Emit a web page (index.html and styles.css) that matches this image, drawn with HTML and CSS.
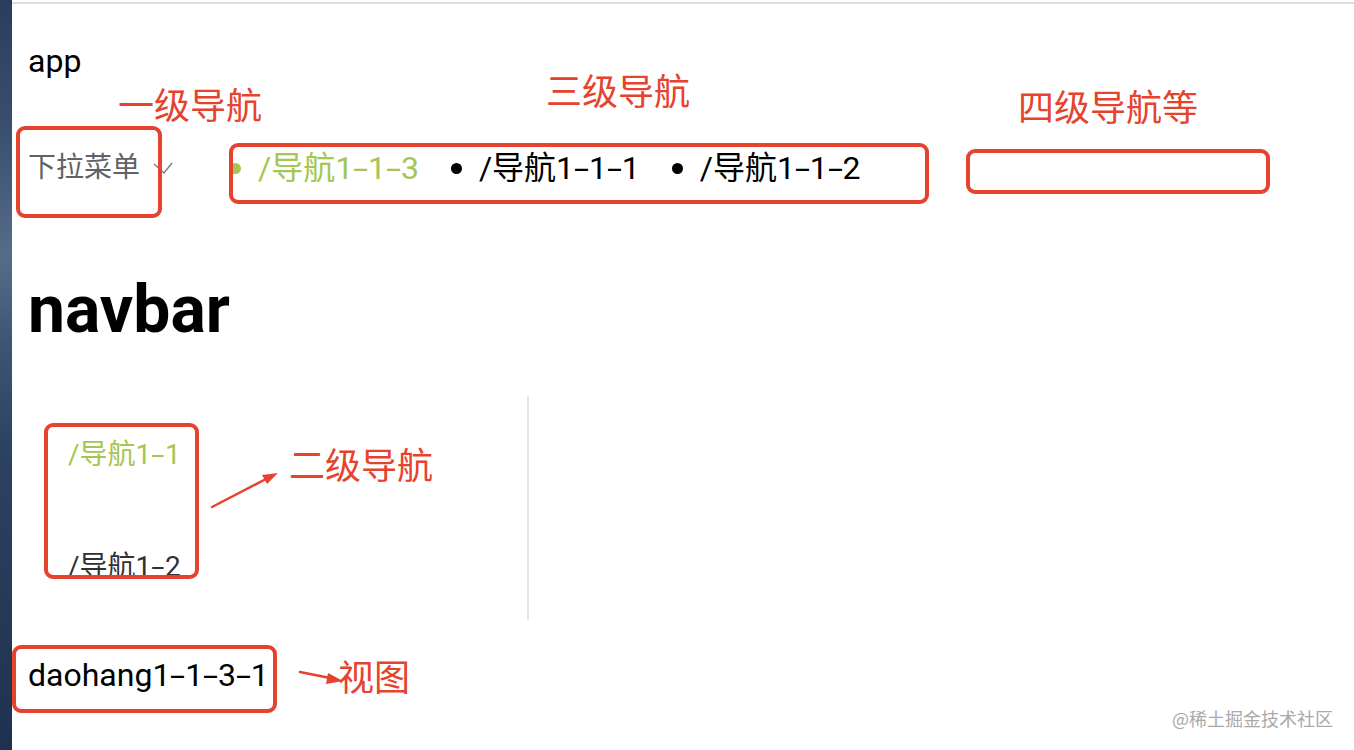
FILE: index.html
```html
<!DOCTYPE html>
<html lang="zh-CN">
<head>
<meta charset="utf-8">
<title>navbar</title>
<link rel="stylesheet" href="styles.css">
</head>
<body>
<div class="screen">
  <div class="desk-strip"></div>
  <div class="window">
    <div class="app-title">app</div>
    <div class="top-row">
      <div class="dropdown">
        <span class="dropdown-label">下拉菜单</span>
        <svg class="chevron" width="22" height="14" viewBox="0 0 22 14"><polyline points="2,3 12,12 20,2" fill="none" stroke="#7a7c80" stroke-width="1.4"/></svg>
      </div>
      <ul class="third-nav">
        <li class="third-item active"><span class="dot"></span><span>/导航1<span class="dash">-</span>1<span class="dash">-</span>3</span></li>
        <li class="third-item"><span class="dot"></span><span>/导航1<span class="dash">-</span>1<span class="dash">-</span>1</span></li>
        <li class="third-item"><span class="dot"></span><span>/导航1<span class="dash">-</span>1<span class="dash">-</span>2</span></li>
      </ul>
    </div>
    <h1 class="navbar-title">navbar</h1>
    <ul class="side-menu">
      <li class="menu-item active">/导航1<span class="dash">-</span>1</li>
      <li class="menu-item">/导航1<span class="dash">-</span>2</li>
    </ul>
    <div class="view">daohang1<span class="dash">-</span>1<span class="dash">-</span>3<span class="dash">-</span>1</div>
  </div>
</div>

<div class="mark box1"></div>
<div class="mark box2"></div>
<div class="mark box3"></div>
<div class="mark box4"></div>
<div class="mark box5"></div>

<div class="label label1">一级导航</div>
<div class="label label2">三级导航</div>
<div class="label label3">四级导航等</div>
<div class="label label4">二级导航</div>
<div class="label label5">视图</div>

<svg class="arrows" width="1354" height="750" viewBox="0 0 1354 750">
  <line x1="212" y1="507" x2="266" y2="479" stroke="#e5432e" stroke-width="2.5" stroke-linecap="round"/>
  <polygon points="278,473 262,475 267,484" fill="#e5432e"/>
  <line x1="300" y1="672" x2="330" y2="678" stroke="#e5432e" stroke-width="2.5" stroke-linecap="round"/>
  <polygon points="343,681 328,673 326,684" fill="#e5432e"/>
</svg>

<div class="watermark">@稀土掘金技术社区</div>
</body>
</html>
```

FILE: styles.css
```css
html, body {
  margin: 0;
  padding: 0;
  background: #ffffff;
}

body {
  font-family: Roboto, "Noto Sans CJK SC", sans-serif;
  color: #000;
  width: 1354px;
  height: 750px;
  overflow: hidden;
  position: relative;
}

.screen {
  display: flex;
  height: 750px;
}

.desk-strip {
  width: 12px;
  flex: none;
  background: linear-gradient(to bottom, #2b3d5c 0%, #3a5070 18%, #566d8a 34%, #3d5473 46%, #2c4262 60%, #263a58 80%, #1f3150 100%);
}

.window {
  flex: 1;
  margin-top: 2px;
  border-top: 2px solid #dedede;
  padding-left: 16px;
  display: flex;
  flex-direction: column;
}

.dash {
  display: inline-block;
  margin: 0 3px;
  transform: scaleX(1.7);
}

.app-title {
  margin-top: 39px;
  font-size: 32px;
  line-height: 37px;
  height: 37px;
}

.top-row {
  margin-top: 58px;
  height: 60px;
  display: flex;
  align-items: center;
}

.dropdown {
  display: flex;
  align-items: center;
  color: #606266;
  font-size: 28px;
  line-height: 40px;
}

.dropdown-label {
  display: block;
}

.chevron {
  margin-left: 12px;
  display: block;
}

.third-nav {
  list-style: none;
  margin: 0 0 0 56px;
  padding: 0;
  display: flex;
  align-items: center;
  gap: 32px;
  font-size: 32px;
  line-height: 40px;
}

.third-item {
  display: flex;
  align-items: center;
  color: #000;
}

.third-item .dot {
  width: 11px;
  height: 11px;
  border-radius: 50%;
  background: currentColor;
  margin-right: 17px;
  flex: none;
}

.third-item.active {
  color: #a5c653;
}

.navbar-title {
  margin: 74px 0 0 0;
  font-size: 66px;
  font-weight: 700;
  line-height: 76px;
  height: 76px;
}

.side-menu {
  list-style: none;
  margin: 48px 0 0 0;
  padding: 0;
  width: 499px;
  border-right: 2px solid #e6e6e6;
}

.menu-item {
  height: 112px;
  box-sizing: border-box;
  padding-top: 6px;
  line-height: 106px;
  padding-left: 40px;
  font-size: 28px;
  color: #303133;
}

.menu-item.active {
  color: #a5c653;
}

.view {
  margin-top: 37px;
  font-size: 32px;
  line-height: 37px;
}

.mark {
  position: absolute;
  border: 4px solid #e5432e;
  border-radius: 9px;
  box-sizing: border-box;
}

.box1 { left: 16px; top: 126px; width: 146px; height: 92px; }
.box2 { left: 229px; top: 143px; width: 700px; height: 61px; }
.box3 { left: 966px; top: 149px; width: 304px; height: 45px; }
.box4 { left: 44px; top: 423px; width: 155px; height: 156px; }
.box5 { left: 12px; top: 645px; width: 265px; height: 68px; }

.label {
  position: absolute;
  color: #e5432e;
  font-family: "Noto Sans CJK SC", sans-serif;
  font-size: 36px;
  line-height: 36px;
  white-space: nowrap;
}

.label1 { left: 118px; top: 85px; }
.label2 { left: 546px; top: 71px; }
.label3 { left: 1018px; top: 87px; }
.label4 { left: 289px; top: 445px; }
.label5 { left: 338px; top: 657px; }

.arrows {
  position: absolute;
  left: 0;
  top: 0;
  pointer-events: none;
}

.watermark {
  position: absolute;
  left: 1172px;
  top: 709px;
  font-size: 18px;
  line-height: 18px;
  color: #a9a9a9;
  font-family: "Noto Sans CJK SC", sans-serif;
  white-space: nowrap;
}
```
